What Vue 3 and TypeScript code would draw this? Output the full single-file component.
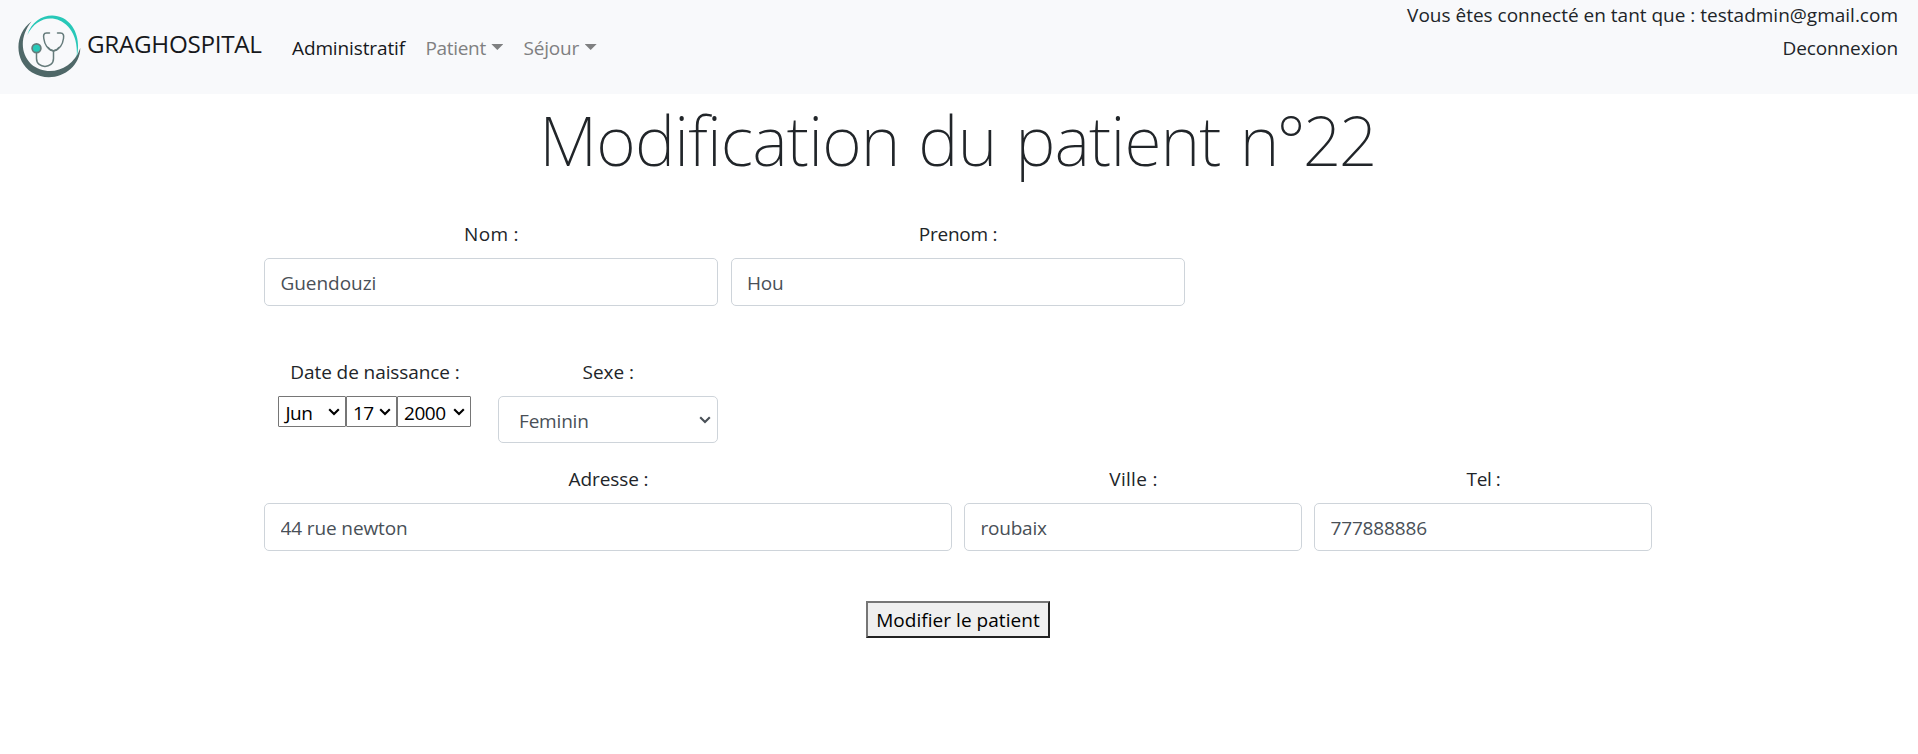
<script setup lang="ts">
import { reactive } from 'vue'

const patient = reactive({
  nom: 'Guendouzi',
  prenom: 'Hou',
  mois: 'Jun',
  jour: '17',
  annee: '2000',
  sexe: 'Feminin',
  adresse: '44 rue newton',
  ville: 'roubaix',
  tel: '777888886',
})
</script>

<template>
  <div class="page">
    <header class="navbar">
      <a class="brand">
        <svg class="logo" viewBox="18 14 64 64" fill="none">
          <path d="M31.5 21.5C14 34 14 61 32 72.5C53 85 80 71 80.3 48C72 72 46 77 31 64C20 53 20 36 31.5 21.5Z" fill="#4f6868" />
          <path d="M27.3 35C34 13 60 9 72 26C79 36 79 48 76.6 58C78 43 74 33 68 26.500C55 13 36 17 27.300 35Z" fill="#28c8b8" />
          <g stroke="#657b7b" stroke-width="1.5" stroke-linecap="round">
            <path d="M49.500 33H46.500C43.500 33 43.300 35.500 43.800 38.500C44.500 44 47.500 49.500 53.500 51C59.500 49.500 62.800 44 63.500 38.500C64 35.500 63.500 33 60.500 33H57.500" />
            <path d="M48 47.500C51 51.800 56 51.800 59 47.500" stroke-width="1.600" />
            <path d="M53.500 51V58.500C53.500 69 36.500 69 36.500 58.500V53" />
            <circle cx="36.500" cy="48.300" r="4.400" fill="#27c9b8" stroke-width="1.700" />
          </g>
        </svg>
        <span class="brand-name">GRAGHOSPITAL</span>
      </a>
      <nav class="menu">
        <a class="link active">Administratif</a>
        <a class="link patient">Patient<i class="caret"></i></a>
        <a class="link sejour">Séjour<i class="caret"></i></a>
      </nav>
      <div class="account">
        <span class="user">Vous êtes connecté en tant que : testadmin@gmail.com</span>
        <a class="logout">Deconnexion</a>
      </div>
    </header>

    <h1>Modification du patient <span class="number">n°22</span></h1>

    <form class="form" @submit.prevent>
      <div class="row names">
        <label class="field"><span class="lbl nom">Nom :</span><input v-model="patient.nom" class="control guen" /></label>
        <label class="field"><span class="lbl prenom">Prenom :</span><input v-model="patient.prenom" class="control" /></label>
      </div>
      <div class="row birth">
        <div class="field date">
          <span class="lbl">Date de naissance :</span>
          <div class="selects">
            <div class="sel month"><span>{{ patient.mois }}</span><svg viewBox="0 0 12 8"><path d="M1.200 1.200L6 6L10.800 1.200" /></svg></div>
            <div class="sel day"><span>{{ patient.jour }}</span><svg viewBox="0 0 12 8"><path d="M1.200 1.200L6 6L10.800 1.200" /></svg></div>
            <div class="sel year"><span>{{ patient.annee }}</span><svg viewBox="0 0 12 8"><path d="M1.200 1.200L6 6L10.800 1.200" /></svg></div>
          </div>
        </div>
        <div class="field sexe">
          <span class="lbl">Sexe :</span>
          <div class="control choice"><span>{{ patient.sexe }}</span><svg viewBox="0 0 12 8"><path d="M1.200 1.200L6 6L10.800 1.200" /></svg></div>
        </div>
      </div>
      <div class="row address">
        <label class="field"><span class="lbl adr">Adresse :</span><input v-model="patient.adresse" class="control rue" /></label>
        <label class="field"><span class="lbl ville">Ville :</span><input v-model="patient.ville" class="control city" /></label>
        <label class="field"><span class="lbl tel">Tel :</span><input v-model="patient.tel" class="control phone" /></label>
      </div>
      <button class="submit" type="submit">Modifier le patient</button>
    </form>
  </div>
</template>

<style>
body { background: #fff; }
</style>

<style scoped>
* { box-sizing: border-box; }
.page {
  min-height: 754px;
  font-family: "Open Sans", "Noto Sans", sans-serif;
  font-size: 19px;
  font-weight: 400;
  line-height: 30px;
  letter-spacing: -0.05px;
  color: #212529;
}
.navbar {
  display: flex;
  height: 94px;
  padding: 0 20px 0 18px;
  background: #f8f9fb;
  white-space: nowrap;
}
.brand { display: flex; width: 274px; padding-top: 14px; color: #16181b; }
.logo { width: 64px; height: 64px; }
.brand-name { margin: 11px 0 0 5px; font-size: 24.25px; line-height: 38px; letter-spacing: -0.3px; }
.menu { display: flex; padding-top: 33px; }
.link { color: #7f8081; display: flex; }
.active { color: #16181b; width: 133.500px; letter-spacing: -0.12px; }
.patient { width: 98px; letter-spacing: -0.33px; }
.sejour { letter-spacing: -0.18px; }
.caret {
  width: 12px;
  height: 6px;
  margin: 11px 0 0 5.500px;
  background: #7f8081;
  clip-path: polygon(0 0, 100% 0, 50% 100%);
}
.account { margin-left: auto; display: flex; flex-direction: column; align-items: flex-end; }
.user { letter-spacing: 0; }
.logout { margin-top: 3px; letter-spacing: -0.12px; }

h1 {
  margin: 0;
  padding: 4px 4px 0 0;
  height: 125px;
  text-align: center;
  font-family: "Noto Sans", sans-serif;
  font-weight: 200;
  font-size: 68px;
  line-height: 84px;
  letter-spacing: -0.85px;
  word-spacing: 2px;
}
.number { letter-spacing: -2.8px; }

.form { width: 1388px; margin: 0 auto 0 264px; display: flex; flex-direction: column; }
.row { display: grid; gap: 12.500px; }
.names { grid-template-columns: 454px 454px; height: 138px; align-items: start; }
.birth { grid-template-columns: 221px 220px; height: 107px; align-items: start; }
.address { grid-template-columns: 688px 338px 338px; gap: 12px; height: 137px; align-items: start; }
.field { display: flex; flex-direction: column; gap: 9px; }
.lbl { text-align: center; line-height: 30px; padding-left: 1px; }
.nom { letter-spacing: 0.3px; }
.prenom { letter-spacing: -0.25px; }
.adr { letter-spacing: -0.1px; }
.ville { letter-spacing: 0.3px; }
.tel { letter-spacing: -0.4px; }
.control {
  width: 100%;
  height: 48px;
  padding: 1px 16px 0 15.500px;
  border: 1px solid #ced4da;
  border-radius: 5px;
  background: #fff;
  color: #495057;
  font: inherit;
  letter-spacing: -0.24px;
  outline: none;
}
.guen { letter-spacing: -0.05px; }
.rue { letter-spacing: -0.12px; }
.city { letter-spacing: -0.22px; }
.phone { letter-spacing: -0.16px; }
.sel svg, .choice svg { width: 12px; height: 8px; fill: none; stroke: currentColor; stroke-width: 2.100; }
.selects { display: flex; margin-left: 14px; }
.sel {
  display: flex;
  justify-content: space-between;
  align-items: center;
  height: 31px;
  border: 1px solid #767676;
  border-radius: 1px;
  color: #000;
  line-height: 29px;
}
.sel span { padding-top: 3px; }
.month { width: 68px; padding: 0 5px 0 6.500px; letter-spacing: -0.5px; }
.day { width: 51px; padding: 0 5.500px 0 6px; letter-spacing: -0.5px; }
.year { width: 74px; padding: 0 5.500px 0 6px; letter-spacing: -0.45px; }
.date .lbl { letter-spacing: -0.08px; }
.sexe { margin-left: 0.500px; }
.choice { display: flex; justify-content: space-between; align-items: center; height: 47px; padding: 0 5.500px 0 20px; letter-spacing: -0.18px; }
.choice span { padding-top: 2px; }
.submit {
  align-self: center;
  width: 184px;
  height: 37px;
  padding: 0;
  border: 2px solid;
  border-color: #767676 #212121 #212121 #767676;
  border-radius: 0;
  background: #efefef;
  color: #000;
  font: inherit;
  letter-spacing: 0.04px;
  white-space: nowrap;
}
</style>
